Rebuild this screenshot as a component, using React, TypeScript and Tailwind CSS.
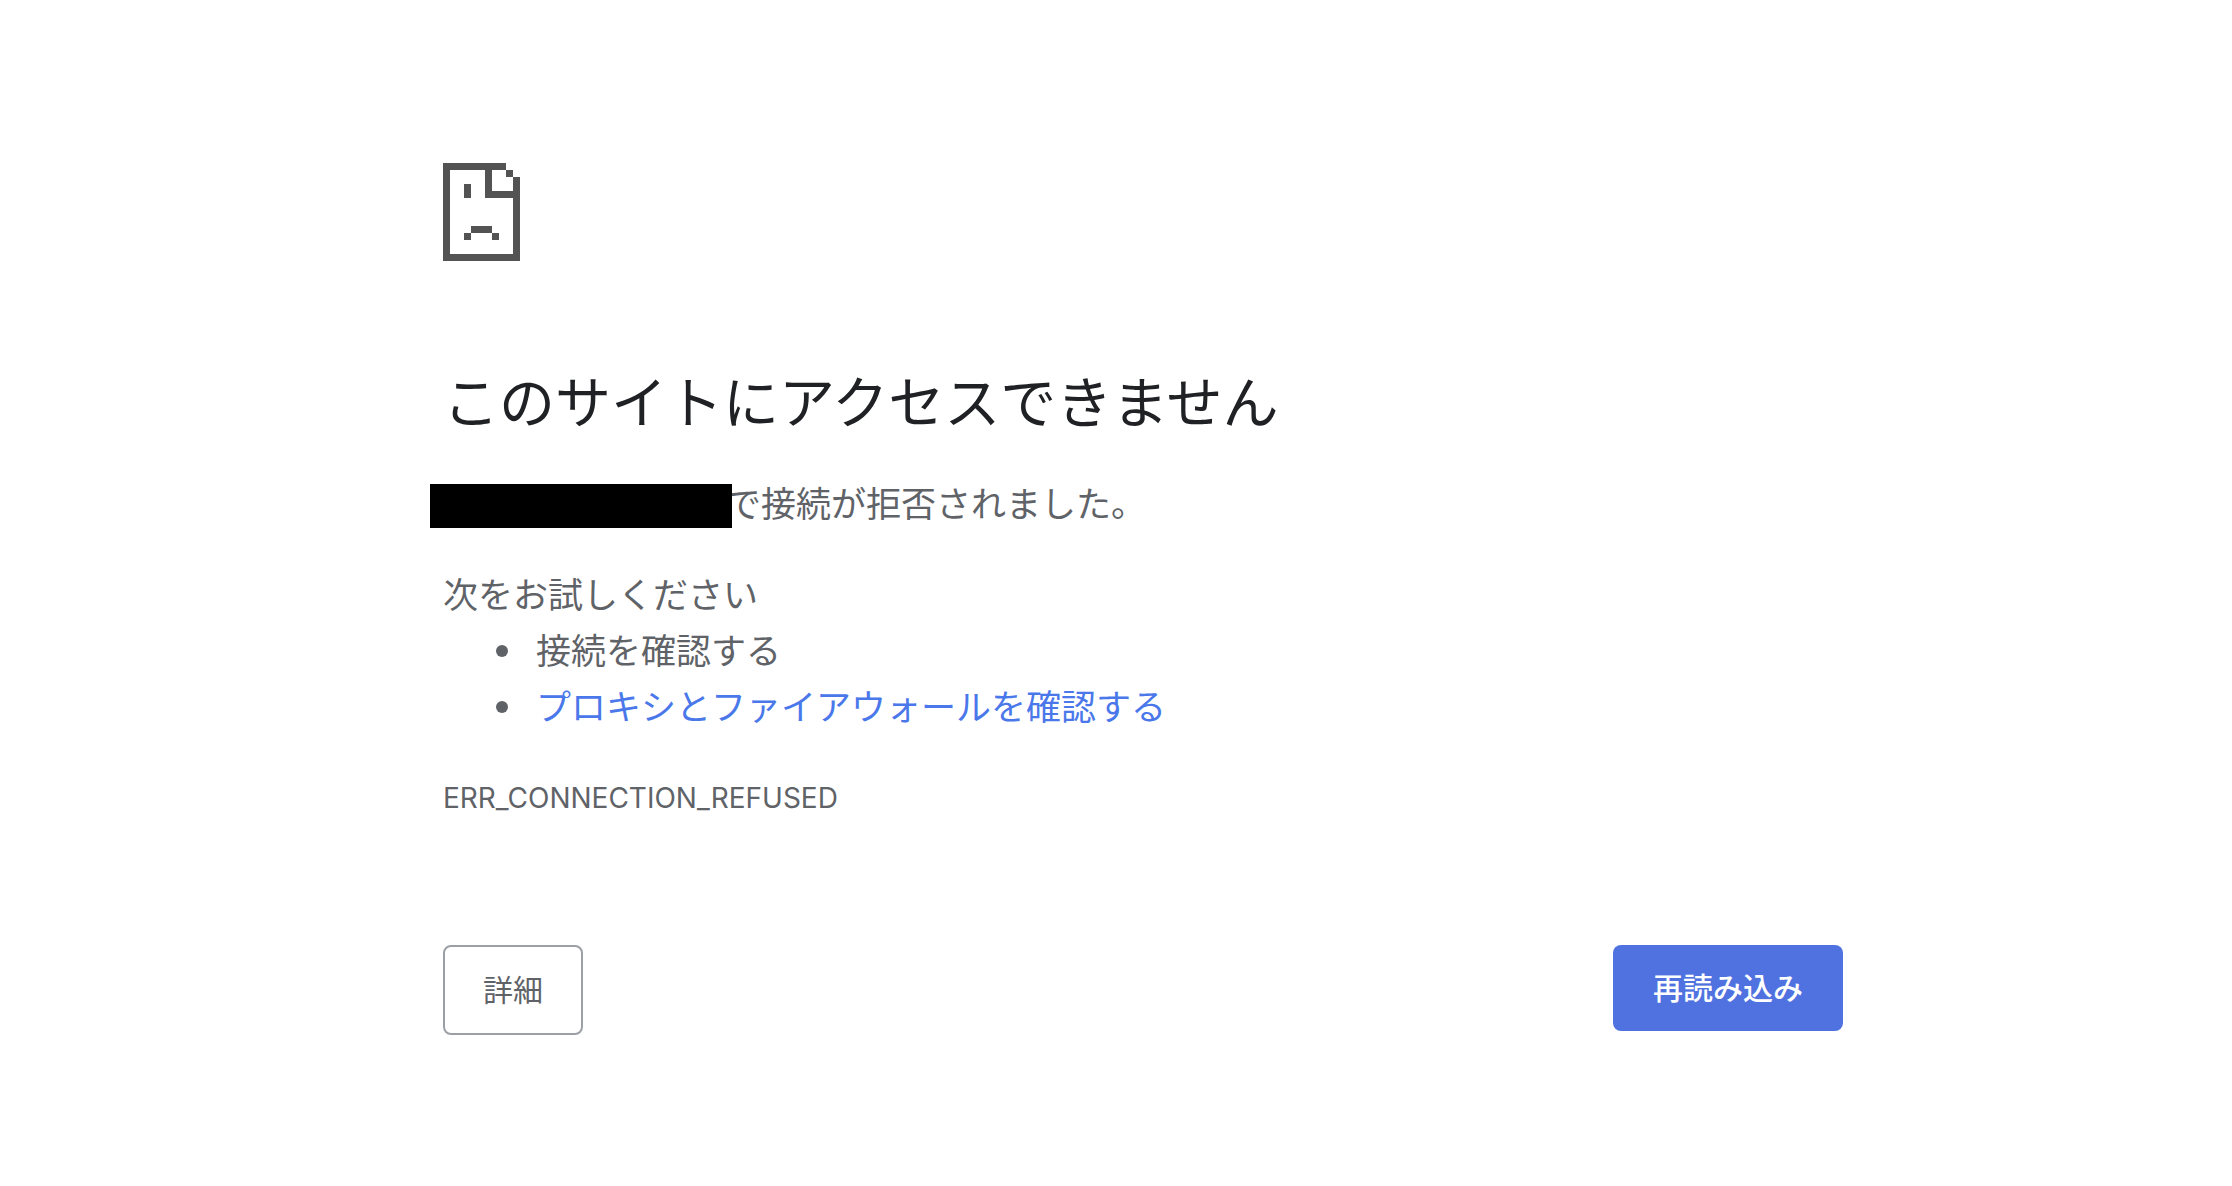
const ink = '#535353';

// Page outline, folded corner and sad face on an 11 x 14 pixel grid: [x, y, width, height]
const pixels = [
  [0, 0, 9, 1],
  [0, 1, 1, 12],
  [0, 13, 11, 1],
  [10, 2, 1, 11],
  [9, 1, 1, 1],
  [6, 1, 1, 4],
  [7, 4, 3, 1],
  [3, 3, 1, 2],
  [4, 9, 3, 1],
  [3, 10, 1, 1],
  [7, 10, 1, 1],
];

function SadPageIcon() {
  return (
    <svg
      viewBox="0 0 11 14"
      className="block h-[98px] w-[77px]"
      fill={ink}
      shapeRendering="crispEdges"
      aria-hidden="true"
    >
      {pixels.map(([x, y, width, height]) => (
        <rect key={`${x}-${y}`} x={x} y={y} width={width} height={height} />
      ))}
    </svg>
  );
}

const item =
  "flex items-center gap-7 before:size-3 before:shrink-0 before:rounded-full before:bg-[#5f6368] before:content-['']";

export default function App() {
  return (
    <div className="min-h-screen bg-white pt-[163px] pb-16 pl-[54px] font-['Inter','Noto_Sans_CJK_JP',sans-serif] text-[#5f6368]">
      <main className="mx-auto w-full max-w-[1400px]">
        <SadPageIcon />
        <h1 className="mt-[105px] text-[56px] leading-[74px] text-[#202124]">
          このサイトにアクセスできません
        </h1>
        <div className="mt-10 text-[35px] leading-[56px]">
          <p className="flex items-end leading-[48px]">
            <span className="relative z-10 -ml-[13px] h-11 w-[302px] bg-black" />
            <span className="-ml-1.5">で接続が拒否されました。</span>
          </p>
          <p className="mt-[39px]">次をお試しください</p>
          <ul className="pl-[53px]">
            <li className={item}>接続を確認する</li>
            <li className={item}>
              <a href="#buttons" className="text-[#4a78ea]">
                プロキシとファイアウォールを確認する
              </a>
            </li>
          </ul>
        </div>
        <p className="mt-10 text-[28px] leading-[46px]">ERR_CONNECTION_REFUSED</p>
        <div id="buttons" className="mt-[124px] flex items-start justify-between text-[30px] leading-[46px]">
          <button
            type="button"
            className="rounded-lg border-2 border-[#9aa0a6] px-[38px] py-5"
          >
            詳細
          </button>
          <button
            type="button"
            className="rounded-lg bg-[#4f72e0] px-10 py-5 font-medium text-white"
          >
            再読み込み
          </button>
        </div>
      </main>
    </div>
  );
}
